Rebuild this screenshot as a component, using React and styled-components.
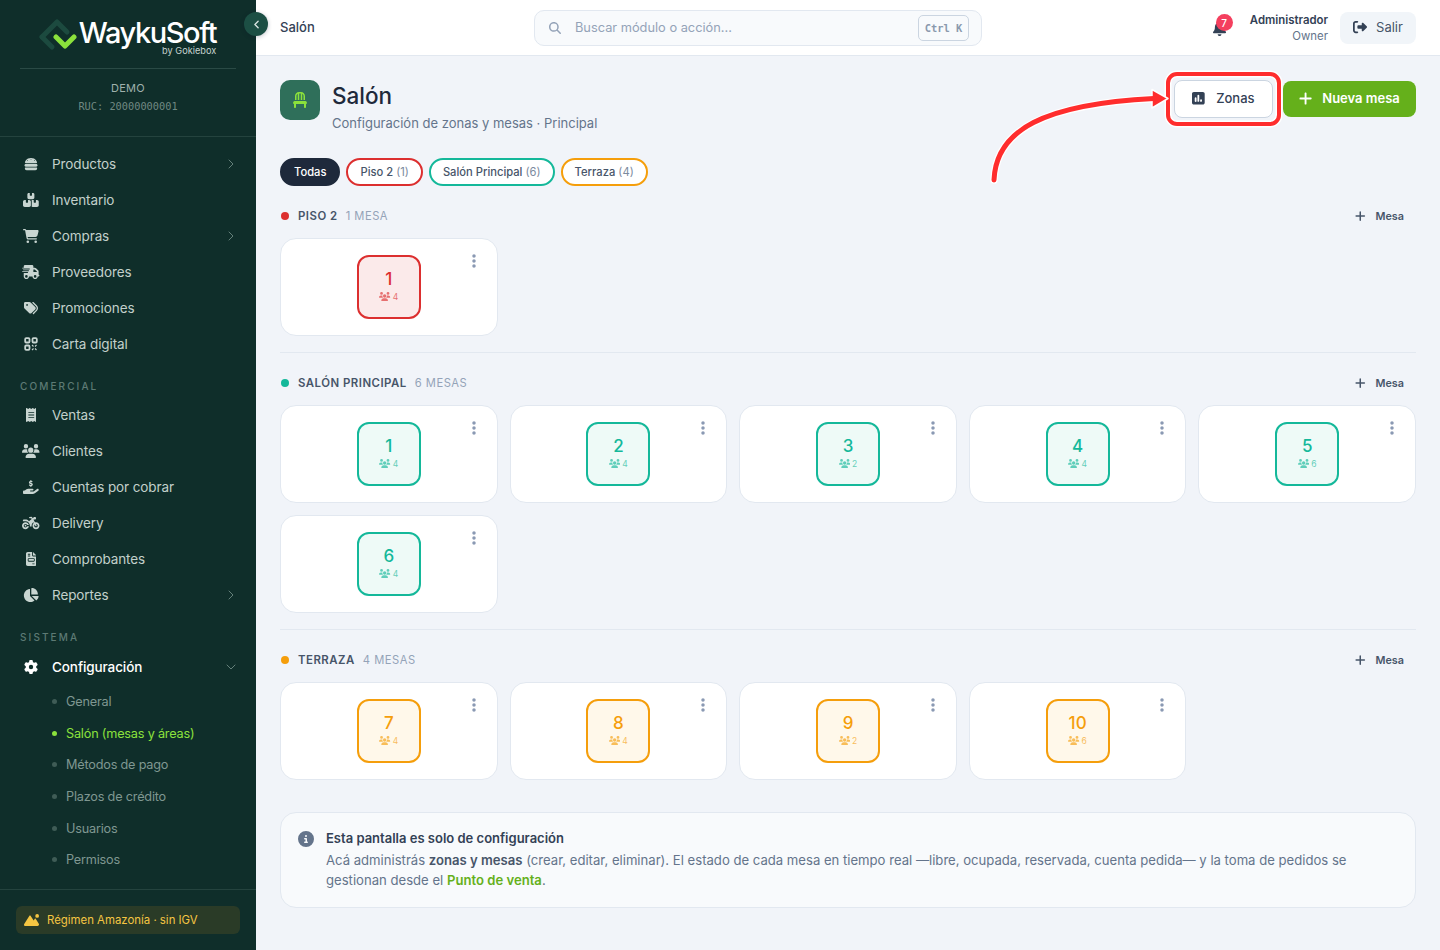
import React from 'react';
import styled, { createGlobalStyle } from 'styled-components';
import { ChevronDown, ChevronLeft, ChevronRight } from 'lucide-react';
import {
  FaBell,
  FaBoxesStacked,
  FaBurger,
  FaCartShopping,
  FaChair,
  FaChartPie,
  FaCircleInfo,
  FaEllipsisVertical,
  FaFileInvoice,
  FaGear,
  FaHandHoldingDollar,
  FaMagnifyingGlass,
  FaMotorcycle,
  FaMountainSun,
  FaPlus,
  FaReceipt,
  FaRightFromBracket,
  FaSquarePollVertical,
  FaTags,
  FaTruckFast,
  FaUsers,
} from 'react-icons/fa6';

const GlobalStyle = createGlobalStyle`
  html, body { margin: 0; padding: 0; height: 100%; }
  body {
    font-family: Inter, "Noto Sans", "Liberation Sans", sans-serif;
    background: #f1f4f9;
    color: #1e293b;
  }
  * { box-sizing: border-box; }
  /* react-icons squeezes every glyph into 1em, give them their real font awesome width */
  svg[viewBox="0 0 640 512"] { width: 1.25em; }
  svg[viewBox="0 0 576 512"] { width: 1.125em; }
  svg[viewBox="0 0 448 512"] { width: 0.875em; }
  svg[viewBox="0 0 384 512"] { width: 0.75em; }
  svg[viewBox="0 0 128 512"] { width: 0.25em; }
`;

const Shell = styled.div`
  position: relative;
  display: flex;
  width: 1440px;
  height: 950px;
  overflow: hidden;
`;

/* sidebar */
const Sidebar = styled.aside`
  position: relative;
  flex: 0 0 256px;
  display: flex;
  flex-direction: column;
  background: #0f2e2a;
  color: #c8d5d1;
`;

const CollapseButton = styled.div`
  position: absolute;
  top: 12px;
  left: 244px;
  width: 24px;
  height: 24px;
  border-radius: 50%;
  background: #1c4f44;
  color: #d8e4e0;
  display: flex;
  align-items: center;
  justify-content: center;
  box-shadow: 0 1px 4px rgba(15, 23, 42, 0.25);
  z-index: 5;
`;

const LogoRow = styled.div`
  height: 69px;
  margin: 0 20px;
  border-bottom: 1px solid #2a4a45;
  display: flex;
  align-items: flex-start;
  justify-content: center;
  gap: 2px;
  padding: 16px 3px 0 0;
`;

const LogoText = styled.div`
  display: flex;
  flex-direction: column;
  align-items: flex-end;
  color: #fff;
`;

const LogoName = styled.span`
  margin-top: 2px;
  font-size: 29px;
  line-height: 30px;
  font-weight: 500;
  letter-spacing: -1.4px;
`;

const LogoBy = styled.span`
  margin-top: -2px;
  font-size: 9.2px;
  line-height: 10px;
  color: #c6d3cf;
`;

const Company = styled.div`
  height: 68px;
  border-bottom: 1px solid #24433e;
  display: flex;
  flex-direction: column;
  align-items: center;
  padding-top: 12px;
`;

const CompanyName = styled.div`
  font-size: 11px;
  line-height: 14px;
  color: #9fb1ac;
  letter-spacing: 0.3px;
`;

const CompanyRuc = styled.div`
  margin-top: 4px;
  font-family: "DejaVu Sans Mono", "Liberation Mono", monospace;
  font-size: 10.3px;
  line-height: 14px;
  color: #6f8882;
`;

const Nav = styled.nav`
  flex: 1;
  overflow: hidden;
  min-height: 0;
`;

const SectionLabel = styled.div`
  height: 16px;
  margin: ${(p) => p.$margin};
  padding-left: 20px;
  font-size: 10px;
  line-height: 16px;
  font-weight: 500;
  letter-spacing: 2.1px;
  color: #5d7a74;
`;

const NavItem = styled.div`
  height: 36px;
  display: flex;
  align-items: center;
  padding: 0 17px 0 21px;
  font-size: 13.5px;
  letter-spacing: -0.1px;
  color: ${(p) => (p.$open ? '#fff' : '#c2d0cb')};
  font-weight: ${(p) => (p.$open ? 500 : 400)};
`;

const NavIcon = styled.span`
  flex: 0 0 20px;
  display: flex;
  justify-content: center;
  font-size: 14px;
  margin-right: 11px;
  color: ${(p) => (p.$open ? '#fff' : '#c8d5d1')};
`;

const NavText = styled.span`
  flex: 1;
`;

const NavArrow = styled.span`
  display: flex;
  color: #64807a;
`;

const SubList = styled.div`
  padding-top: 0.6px;
`;

const SubItem = styled.div`
  height: 31.7px;
  display: flex;
  align-items: center;
  padding-left: 52px;
  font-size: 12.7px;
  letter-spacing: -0.2px;
  color: ${(p) => (p.$active ? '#8be13c' : '#7f9791')};

  &::before {
    content: '';
    width: 5px;
    height: 5px;
    border-radius: 50%;
    margin-right: 9px;
    background: ${(p) => (p.$active ? '#8be13c' : '#3f5c56')};
  }
`;

const SideFoot = styled.div`
  height: 61px;
  border-top: 1px solid #24433e;
  padding: 16px 16px 0;
`;

const RegimeBadge = styled.div`
  height: 28px;
  border-radius: 6px;
  background: #2a3b27;
  color: #f5c542;
  display: flex;
  align-items: center;
  gap: 8px;
  padding: 0 8px;
  font-size: 11.4px;

  svg {
    font-size: 12px;
  }
`;

/* right side */
const Main = styled.div`
  flex: 1;
  min-width: 0;
  display: flex;
  flex-direction: column;
`;

const Topbar = styled.header`
  height: 56px;
  flex: 0 0 56px;
  background: #fff;
  border-bottom: 1px solid #e2e8f0;
  display: grid;
  grid-template-columns: 254px 448px 1fr;
  align-items: center;
  padding: 0 24px;
`;

const Crumb = styled.div`
  padding-bottom: 1px;
  font-size: 13px;
  font-weight: 500;
  color: #334155;
`;

const SearchBox = styled.div`
  height: 36px;
  border: 1px solid #e2e8f0;
  border-radius: 10px;
  background: #f8fafc;
  display: flex;
  align-items: center;
  padding: 0 12px 0 14px;
  color: #94a3b8;
  font-size: 12.8px;

  svg {
    font-size: 12px;
    margin-right: 14px;
  }
`;

const SearchHint = styled.span`
  flex: 1;
`;

const Kbd = styled.span`
  width: 51px;
  height: 26px;
  border: 1px solid #cbd5e1;
  border-radius: 5px;
  display: flex;
  align-items: center;
  justify-content: center;
  font-family: "DejaVu Sans Mono", "Liberation Mono", monospace;
  font-size: 10.4px;
  font-weight: 700;
  color: #8a99ad;
`;

const TopRight = styled.div`
  display: flex;
  align-items: center;
  justify-content: flex-end;
`;

const Bell = styled.div`
  position: relative;
  top: 1px;
  color: #334155;
  font-size: 15px;
  display: flex;
  margin-right: 24px;
`;

const BellCount = styled.span`
  position: absolute;
  top: -7px;
  left: 3px;
  width: 17px;
  height: 17px;
  border-radius: 50%;
  background: #f43f5e;
  color: #fff;
  font-size: 10px;
  font-weight: 500;
  display: flex;
  align-items: center;
  justify-content: center;
`;

const UserBlock = styled.div`
  padding-top: 1px;
  text-align: right;
  margin-right: 12px;
`;

const UserName = styled.div`
  font-size: 11.4px;
  line-height: 16px;
  font-weight: 600;
  color: #334155;
`;

const UserRole = styled.div`
  font-size: 11.4px;
  line-height: 16px;
  color: #64748b;
`;

const ExitButton = styled.div`
  width: 76px;
  height: 32px;
  padding-bottom: 1px;
  border-radius: 8px;
  background: #f1f5f9;
  display: flex;
  align-items: center;
  justify-content: center;
  gap: 9px;
  font-size: 13px;
  color: #475569;

  svg {
    font-size: 14px;
    color: #334155;
  }
`;

const Content = styled.main`
  flex: 1;
  padding: 24px;
`;

const PageHead = styled.div`
  display: flex;
  justify-content: space-between;
  align-items: flex-start;
  margin-bottom: 25px;
`;

const TitleGroup = styled.div`
  display: flex;
  gap: 12px;
`;

const TitleIcon = styled.div`
  width: 40px;
  height: 40px;
  border-radius: 10px;
  background: #2f6f5a;
  color: #8be13c;
  display: flex;
  align-items: center;
  justify-content: center;
  font-size: 16px;
`;

const Title = styled.h1`
  margin: 0;
  font-size: 22.5px;
  line-height: 32px;
  font-weight: 500;
  color: #1e293b;
`;

const Subtitle = styled.div`
  margin-top: 1px;
  font-size: 13px;
  line-height: 20px;
  color: #64748b;
`;

const HeadActions = styled.div`
  display: flex;
  align-items: center;
  gap: 10px;
  height: 38px;
`;

const GhostButton = styled.div`
  width: 99px;
  height: 38px;
  padding-bottom: 2px;
  border: 1px solid #cbd5e1;
  border-radius: 8px;
  background: #fff;
  display: flex;
  align-items: center;
  justify-content: center;
  gap: 11px;
  font-size: 13px;
  font-weight: 500;
  color: #334155;

  svg {
    font-size: 14.5px;
    color: #334155;
  }
`;

const PrimaryButton = styled.div`
  width: 133px;
  height: 36px;
  padding-bottom: 2px;
  border-radius: 8px;
  background: #65b01b;
  display: flex;
  align-items: center;
  justify-content: center;
  gap: 10px;
  font-size: 13px;
  font-weight: 600;
  color: #fff;

  svg {
    font-size: 15px;
  }
`;

const Pills = styled.div`
  display: flex;
  gap: 6px;
`;

const Pill = styled.div`
  height: 28px;
  padding: 0 12px;
  border-radius: 14px;
  display: flex;
  align-items: center;
  gap: 3px;
  font-size: 11.2px;
  font-weight: 500;
  color: ${(p) => (p.$solid ? '#fff' : '#475569')};
  background: ${(p) => (p.$solid ? '#1e293b' : '#fff')};
  border: 2px solid ${(p) => p.$color};
`;

const PillCount = styled.span`
  color: #7b8a9e;
  font-weight: 400;
`;

const ZoneSection = styled.section`
  padding: 18px 0 16px;
  border-bottom: ${(p) => (p.$last ? 'none' : '1px solid #e2e8f0')};
`;

const ZoneHead = styled.div`
  height: 24px;
  margin-bottom: 10px;
  display: flex;
  align-items: center;
`;

const ZoneDot = styled.span`
  width: 8px;
  height: 8px;
  border-radius: 50%;
  margin: 0 9px 0 1px;
  background: ${(p) => p.$color};
`;

const ZoneName = styled.span`
  font-size: 11.4px;
  font-weight: 600;
  letter-spacing: 0.5px;
  color: #475569;
  text-transform: uppercase;
`;

const ZoneCount = styled.span`
  flex: 1;
  margin-left: 8px;
  font-size: 11.2px;
  letter-spacing: 0.5px;
  color: #94a3b8;
  text-transform: uppercase;
`;

const AddTable = styled.div`
  display: flex;
  align-items: center;
  gap: 10px;
  padding-right: 12px;
  font-size: 10.8px;
  font-weight: 600;
  color: #475569;

  svg {
    font-size: 12px;
  }
`;

const CardGrid = styled.div`
  display: grid;
  grid-template-columns: repeat(5, 1fr);
  gap: 12px;
`;

const Card = styled.div`
  position: relative;
  height: 98px;
  border: 1px solid #e2e8f0;
  border-radius: 16px;
  background: #fff;
  display: flex;
  align-items: center;
  justify-content: center;
`;

const CardMenu = styled.span`
  position: absolute;
  top: 14px;
  right: 21px;
  display: flex;
  font-size: 16px;
  color: #8a99b3;
`;

const TableBox = styled.div`
  width: 64px;
  height: 64px;
  padding-bottom: 4px;
  border: 2px solid ${(p) => p.$color};
  border-radius: 12px;
  background: ${(p) => p.$tint};
  color: ${(p) => p.$color};
  display: flex;
  flex-direction: column;
  align-items: center;
  justify-content: center;
`;

const TableNumber = styled.div`
  font-size: 17px;
  line-height: 20px;
  font-weight: 500;
`;

const TableSeats = styled.div`
  margin-top: 3px;
  display: flex;
  align-items: center;
  gap: 2px;
  font-size: 8.5px;
  line-height: 10px;
  opacity: 0.65;

  svg {
    font-size: 9px;
  }
`;

const InfoBox = styled.div`
  margin-top: 16px;
  height: 96px;
  border: 1px solid #e2e8f0;
  border-radius: 16px;
  background: #f8fafc;
  display: flex;
  gap: 12px;
  padding: 15px 48px 0 17px;
`;

const InfoIcon = styled.span`
  display: flex;
  padding-top: 3px;
  font-size: 16px;
  color: #64748b;
`;

const InfoTitle = styled.div`
  font-size: 13px;
  line-height: 20px;
  font-weight: 600;
  color: #334155;
`;

const InfoText = styled.div`
  margin-top: 2px;
  font-size: 13.12px;
  line-height: 20px;
  color: #64748b;

  b {
    font-weight: 600;
    color: #475569;
  }
`;

const InfoLink = styled.span`
  color: #65b01b;
  font-weight: 600;
`;

/* red tutorial marks drawn over the page */
const Highlight = styled.div`
  position: absolute;
  top: 72px;
  left: 1166px;
  width: 115px;
  height: 54px;
  border: 4px solid #ff2d2d;
  border-radius: 11px;
  box-shadow: 0 0 0 1.5px #fff, inset 0 0 0 1.5px #fff;
  pointer-events: none;
`;

const ArrowSvg = styled.svg`
  position: absolute;
  top: 80px;
  left: 980px;
  pointer-events: none;
`;

const LogoMark = () => (
  <svg width="40" height="36" viewBox="0 0 40 36" fill="none" strokeLinecap="round" strokeLinejoin="round">
    <path d="M5 21 L20 6 L30 16" stroke="#1c4a3f" strokeWidth="5" />
    <path d="M5 21 L15 31" stroke="#1c4a3f" strokeWidth="5" />
    <path d="M19 21 L28 30 L37 21" stroke="#8be13c" strokeWidth="5" />
  </svg>
);

// three finder squares and a scatter of modules, the solid fa glyph reads too heavy here
const QrIcon = () => (
  <svg width="14" height="14" viewBox="0 0 14 14" fill="none" stroke="currentColor">
    <rect x="1.2" y="1.2" width="4.3" height="4.3" rx="1" strokeWidth="1.8" />
    <rect x="8.5" y="1.2" width="4.3" height="4.3" rx="1" strokeWidth="1.8" />
    <rect x="1.2" y="8.5" width="4.3" height="4.3" rx="1" strokeWidth="1.8" />
    <path d="M8 8 L9.5 9.5 M12.5 8 L11 9.5 M8 13 L9.5 11.5 M12.5 13 L11 11.5" strokeWidth="1.1" />
  </svg>
);

const catalogItems = [
  { icon: FaBurger, label: 'Productos', arrow: true },
  { icon: FaBoxesStacked, label: 'Inventario' },
  { icon: FaCartShopping, label: 'Compras', arrow: true },
  { icon: FaTruckFast, label: 'Proveedores' },
  { icon: FaTags, label: 'Promociones' },
  { icon: QrIcon, label: 'Carta digital' },
];

const salesItems = [
  { icon: FaReceipt, label: 'Ventas' },
  { icon: FaUsers, label: 'Clientes' },
  { icon: FaHandHoldingDollar, label: 'Cuentas por cobrar' },
  { icon: FaMotorcycle, label: 'Delivery' },
  { icon: FaFileInvoice, label: 'Comprobantes' },
  { icon: FaChartPie, label: 'Reportes', arrow: true },
];

const subItems = ['General', 'Salón (mesas y áreas)', 'Métodos de pago', 'Plazos de crédito', 'Usuarios', 'Permisos'];

const zones = [
  {
    name: 'Piso 2',
    count: '1 mesa',
    color: '#dc2f2f',
    tint: '#fbeaea',
    tables: [{ n: 1, seats: 4 }],
  },
  {
    name: 'Salón Principal',
    count: '6 mesas',
    color: '#14b89a',
    tint: '#eefaf7',
    tables: [
      { n: 1, seats: 4 },
      { n: 2, seats: 4 },
      { n: 3, seats: 2 },
      { n: 4, seats: 4 },
      { n: 5, seats: 6 },
      { n: 6, seats: 4 },
    ],
  },
  {
    name: 'Terraza',
    count: '4 mesas',
    color: '#f59e0b',
    tint: '#fff8ea',
    tables: [
      { n: 7, seats: 4 },
      { n: 8, seats: 4 },
      { n: 9, seats: 2 },
      { n: 10, seats: 6 },
    ],
  },
];

const MenuRow = ({ item }) => (
  <NavItem>
    <NavIcon><item.icon /></NavIcon>
    <NavText>{item.label}</NavText>
    {item.arrow && <NavArrow><ChevronRight size={16} strokeWidth={1.5} /></NavArrow>}
  </NavItem>
);

const App = () => (
  <Shell>
    <GlobalStyle />
    <Sidebar>
      <CollapseButton><ChevronLeft size={13} strokeWidth={2.5} /></CollapseButton>
      <LogoRow>
        <LogoMark />
        <LogoText>
          <LogoName>WaykuSoft</LogoName>
          <LogoBy>by Gokiebox</LogoBy>
        </LogoText>
      </LogoRow>
      <Company>
        <CompanyName>DEMO</CompanyName>
        <CompanyRuc>RUC: 20000000001</CompanyRuc>
      </Company>
      <Nav>
        <SectionLabel $margin="-12px 0 5px">CATÁLOGO</SectionLabel>
        {catalogItems.map((item) => <MenuRow key={item.label} item={item} />)}
        <SectionLabel $margin="16px 0 3px">COMERCIAL</SectionLabel>
        {salesItems.map((item) => <MenuRow key={item.label} item={item} />)}
        <SectionLabel $margin="16px 0 4px">SISTEMA</SectionLabel>
        <NavItem $open>
          <NavIcon $open><FaGear /></NavIcon>
          <NavText>Configuración</NavText>
          <NavArrow><ChevronDown size={16} strokeWidth={1.5} /></NavArrow>
        </NavItem>
        <SubList>
          {subItems.map((label, i) => <SubItem key={label} $active={i === 1}>{label}</SubItem>)}
        </SubList>
      </Nav>
      <SideFoot>
        <RegimeBadge><FaMountainSun />Régimen Amazonía · sin IGV</RegimeBadge>
      </SideFoot>
    </Sidebar>

    <Main>
      <Topbar>
        <Crumb>Salón</Crumb>
        <SearchBox>
          <FaMagnifyingGlass />
          <SearchHint>Buscar módulo o acción...</SearchHint>
          <Kbd>Ctrl K</Kbd>
        </SearchBox>
        <TopRight>
          <Bell>
            <FaBell />
            <BellCount>7</BellCount>
          </Bell>
          <UserBlock>
            <UserName>Administrador</UserName>
            <UserRole>Owner</UserRole>
          </UserBlock>
          <ExitButton><FaRightFromBracket />Salir</ExitButton>
        </TopRight>
      </Topbar>

      <Content>
        <PageHead>
          <TitleGroup>
            <TitleIcon><FaChair /></TitleIcon>
            <div>
              <Title>Salón</Title>
              <Subtitle>Configuración de zonas y mesas · Principal</Subtitle>
            </div>
          </TitleGroup>
          <HeadActions>
            <GhostButton><FaSquarePollVertical />Zonas</GhostButton>
            <PrimaryButton><FaPlus />Nueva mesa</PrimaryButton>
          </HeadActions>
        </PageHead>

        <Pills>
          <Pill $solid $color="#1e293b">Todas</Pill>
          {zones.map((zone) => (
            <Pill key={zone.name} $color={zone.color}>
              {zone.name} <PillCount>({zone.tables.length})</PillCount>
            </Pill>
          ))}
        </Pills>

        {zones.map((zone, i) => (
          <ZoneSection key={zone.name} $last={i === zones.length - 1}>
            <ZoneHead>
              <ZoneDot $color={zone.color} />
              <ZoneName>{zone.name}</ZoneName>
              <ZoneCount>{zone.count}</ZoneCount>
              <AddTable><FaPlus />Mesa</AddTable>
            </ZoneHead>
            <CardGrid>
              {zone.tables.map((table) => (
                <Card key={table.n}>
                  <CardMenu><FaEllipsisVertical /></CardMenu>
                  <TableBox $color={zone.color} $tint={zone.tint}>
                    <TableNumber>{table.n}</TableNumber>
                    <TableSeats><FaUsers />{table.seats}</TableSeats>
                  </TableBox>
                </Card>
              ))}
            </CardGrid>
          </ZoneSection>
        ))}

        <InfoBox>
          <InfoIcon><FaCircleInfo /></InfoIcon>
          <div>
            <InfoTitle>Esta pantalla es solo de configuración</InfoTitle>
            <InfoText>
              Acá administrás <b>zonas y mesas</b> (crear, editar, eliminar). El estado de cada mesa en tiempo real
              {' '}—libre, ocupada, reservada, cuenta pedida— y la toma de pedidos se gestionan desde el{' '}
              <InfoLink>Punto de venta</InfoLink>.
            </InfoText>
          </div>
        </InfoBox>
      </Content>
    </Main>

    <Highlight />
    <ArrowSvg width="200" height="110" viewBox="0 0 200 110" fill="none">
      <path d="M14 100 C16 50 64 24 176 18.5" stroke="#fff" strokeWidth="7.5" strokeLinecap="round" />
      <path d="M172 9.5 L188 18.5 L172 28 Z" fill="#ff2d2d" stroke="#fff" strokeWidth="1.5" strokeLinejoin="round" />
      <path d="M14 100 C16 50 64 24 174 18.5" stroke="#ff2d2d" strokeWidth="5" strokeLinecap="round" />
    </ArrowSvg>
  </Shell>
);

export default App;
